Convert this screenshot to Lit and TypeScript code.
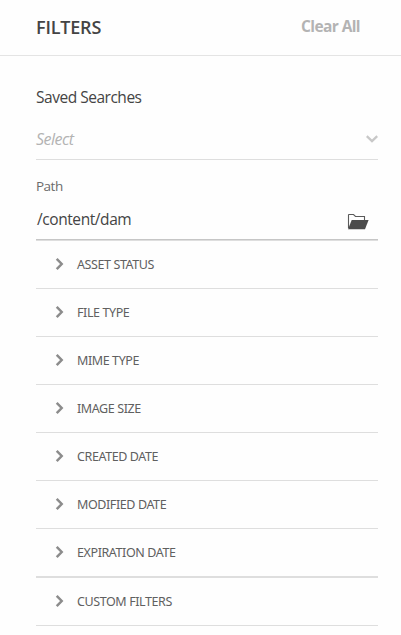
import { LitElement, html, css } from "lit";
import { customElement } from "lit/decorators.js";

const FILTERS = [
  "ASSET STATUS",
  "FILE TYPE",
  "MIME TYPE",
  "IMAGE SIZE",
  "CREATED DATE",
  "MODIFIED DATE",
  "EXPIRATION DATE",
];

@customElement("filter-row")
class FilterRow extends LitElement {
  static properties = { label: { type: String } };
  declare label: string;

  static styles = css`
    :host {
      display: flex;
      align-items: center;
      box-sizing: border-box;
      height: 48px;
      padding-left: 19px;
      border-bottom: 1px solid #dedede;
      font-family: "Noto Sans", "Open Sans", sans-serif;
      font-size: 12.5px;
      letter-spacing: -0.4px;
      color: #606060;
    }
    .chevron {
      width: 9px;
      height: 14px;
      margin: 0 13px 2px 0;
      fill: none;
      stroke: #8c8c8c;
      stroke-width: 2.5;
    }
    .label {
      line-height: 20px;
      white-space: nowrap;
    }
  `;

  render() {
    return html`
      <svg class="chevron" viewBox="0 0 9 14"><path d="M1.7 1.8 L6.7 7 L1.7 12.2" /></svg>
      <span class="label">${this.label}</span>
    `;
  }
}

@customElement("app-root")
class AppRoot extends LitElement {
  static styles = css`
    :host {
      display: block;
      box-sizing: border-box;
      height: 635px;
      overflow: hidden;
      background: #fefefe;
      color: #444;
      font-family: "Open Sans", "Noto Sans", sans-serif;
    }
    .header {
      display: flex;
      justify-content: space-between;
      box-sizing: border-box;
      height: 56px;
      padding: 14px 41px 0 36px;
      border-bottom: 1px solid #e4e4e4;
    }
    .title {
      font-size: 18px;
      font-weight: 550;
      line-height: 27px;
      letter-spacing: -0.2px;
    }
    .clear {
      font-size: 15.5px;
      font-weight: 700;
      line-height: 25px;
      letter-spacing: -0.6px;
      color: #b3b3b3;
    }
    .body {
      padding: 0 23px 0 36px;
    }
    .saved {
      padding-top: 29px;
      font-size: 15.5px;
      line-height: 24px;
      letter-spacing: -0.48px;
    }
    .select {
      display: flex;
      align-items: center;
      justify-content: space-between;
      box-sizing: border-box;
      height: 51px;
      padding-top: 10px;
      border-bottom: 1px solid #dedede;
      font-size: 16px;
      font-style: italic;
      letter-spacing: -0.5px;
      color: #b3b3b3;
    }
    .down {
      width: 12px;
      height: 8px;
      fill: none;
      stroke: #c8c8c8;
      stroke-width: 2.3;
    }
    .path-label {
      padding-top: 16px;
      font-size: 13.5px;
      line-height: 20px;
      letter-spacing: -0.5px;
      color: #6b6b6b;
    }
    .path {
      display: flex;
      align-items: center;
      justify-content: space-between;
      box-sizing: border-box;
      height: 44px;
      padding: 2px 9px 0 1px;
      border-bottom: 1px solid #c6c6c6;
      font-size: 15.5px;
      letter-spacing: -0.42px;
    }
    .folder {
      width: 22px;
      height: 17px;
      margin-top: 5px;
    }
    .list {
      border-top: 1px solid #dedede;
    }
  `;

  render() {
    return html`
      <div class="header">
        <span class="title">FILTERS</span>
        <span class="clear">Clear All</span>
      </div>
      <div class="body">
        <div class="saved">Saved Searches</div>
        <div class="select">
          <span>Select</span>
          <svg class="down" viewBox="0 0 12 8"><path d="M0.8 1.2 L6 6.2 L11.2 1.2" /></svg>
        </div>
        <div class="path-label">Path</div>
        <div class="path">
          <span>/content/dam</span>
          <svg class="folder" viewBox="0 0 22 17">
            <path d="M1.5 15 V2 Q1.5 1.5 2 1.5 H6.5 L8.5 3.5 H17.5 V7" fill="none" stroke="#5a5a5a" stroke-width="1.1" />
            <path d="M4.7 7 H21.6 L18 16.2 H1 Z" fill="#4b4b4b" />
          </svg>
        </div>
        <div class="list">${FILTERS.map((f) => html`<filter-row label=${f}></filter-row>`)}</div>
        <div class="list"><filter-row label="CUSTOM FILTERS"></filter-row></div>
      </div>
    `;
  }
}
